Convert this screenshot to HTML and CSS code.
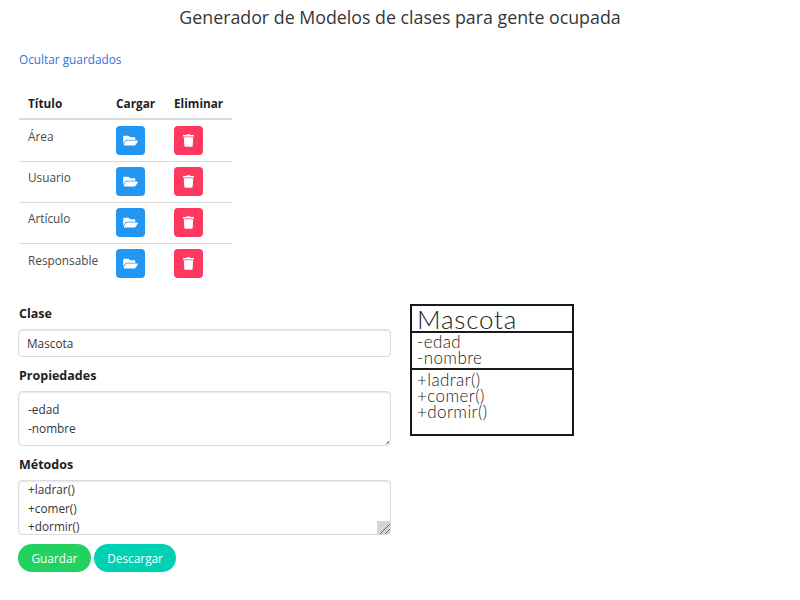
FILE: index.html
```html
<!DOCTYPE html>
<html lang="es">
<head>
<meta charset="utf-8">
<title>Generador de Modelos</title>
<link rel="stylesheet" href="styles.css">
</head>
<body>
<h1 class="title">Generador de Modelos de clases para gente ocupada</h1>
<a class="toggle" href="#">Ocultar guardados</a>
<table class="saved">
  <thead><tr><th class="col-title">Título</th><th class="col-load">Cargar</th><th class="col-del">Eliminar</th></tr></thead>
  <tbody>
    <tr><td>Área</td><td><button class="icon-btn load"><svg viewBox="0 0 576 512" width="15" height="13"><path fill="currentColor" d="M572.7 292.100L500.300 416.200A64 64 0 0 1 445 448H45c-18.500 0-30.100-20.100-20.700-36.100l72.400-124.200A64 64 0 0 1 152 256h400c18.500 0 30.100 20.100 20.700 36.100zM152 224h328v-48c0-26.500-21.500-48-48-48H272l-64-64H48C21.500 64 0 85.500 0 112v278l69.100-118.400C86.200 242.300 117.800 224 152 224z"/></svg></button></td><td><button class="icon-btn del"><svg viewBox="0 0 448 512" width="11" height="13"><path fill="currentColor" d="M432 32H312l-9.400-18.700A24 24 0 0 0 281.100 0H166.800a23.700 23.700 0 0 0-21.400 13.300L136 32H16A16 16 0 0 0 0 48v32a16 16 0 0 0 16 16h416a16 16 0 0 0 16-16V48a16 16 0 0 0-16-16zM53.200 467a48 48 0 0 0 47.900 45h245.800a48 48 0 0 0 47.900-45L416 128H32z"/></svg></button></td></tr>
    <tr><td>Usuario</td><td><button class="icon-btn load"><svg viewBox="0 0 576 512" width="15" height="13"><path fill="currentColor" d="M572.7 292.100L500.300 416.200A64 64 0 0 1 445 448H45c-18.500 0-30.100-20.100-20.700-36.100l72.400-124.200A64 64 0 0 1 152 256h400c18.500 0 30.100 20.100 20.700 36.100zM152 224h328v-48c0-26.500-21.500-48-48-48H272l-64-64H48C21.500 64 0 85.500 0 112v278l69.100-118.400C86.200 242.300 117.800 224 152 224z"/></svg></button></td><td><button class="icon-btn del"><svg viewBox="0 0 448 512" width="11" height="13"><path fill="currentColor" d="M432 32H312l-9.400-18.700A24 24 0 0 0 281.100 0H166.800a23.700 23.700 0 0 0-21.400 13.300L136 32H16A16 16 0 0 0 0 48v32a16 16 0 0 0 16 16h416a16 16 0 0 0 16-16V48a16 16 0 0 0-16-16zM53.200 467a48 48 0 0 0 47.900 45h245.800a48 48 0 0 0 47.900-45L416 128H32z"/></svg></button></td></tr>
    <tr><td>Artículo</td><td><button class="icon-btn load"><svg viewBox="0 0 576 512" width="15" height="13"><path fill="currentColor" d="M572.7 292.100L500.300 416.200A64 64 0 0 1 445 448H45c-18.500 0-30.100-20.100-20.700-36.100l72.400-124.200A64 64 0 0 1 152 256h400c18.500 0 30.100 20.100 20.700 36.100zM152 224h328v-48c0-26.500-21.500-48-48-48H272l-64-64H48C21.500 64 0 85.500 0 112v278l69.100-118.400C86.200 242.300 117.800 224 152 224z"/></svg></button></td><td><button class="icon-btn del"><svg viewBox="0 0 448 512" width="11" height="13"><path fill="currentColor" d="M432 32H312l-9.400-18.700A24 24 0 0 0 281.100 0H166.800a23.700 23.700 0 0 0-21.400 13.300L136 32H16A16 16 0 0 0 0 48v32a16 16 0 0 0 16 16h416a16 16 0 0 0 16-16V48a16 16 0 0 0-16-16zM53.200 467a48 48 0 0 0 47.900 45h245.800a48 48 0 0 0 47.900-45L416 128H32z"/></svg></button></td></tr>
    <tr><td>Responsable</td><td><button class="icon-btn load"><svg viewBox="0 0 576 512" width="15" height="13"><path fill="currentColor" d="M572.7 292.100L500.300 416.200A64 64 0 0 1 445 448H45c-18.500 0-30.100-20.100-20.700-36.100l72.400-124.200A64 64 0 0 1 152 256h400c18.500 0 30.100 20.100 20.700 36.100zM152 224h328v-48c0-26.500-21.500-48-48-48H272l-64-64H48C21.500 64 0 85.500 0 112v278l69.100-118.400C86.200 242.300 117.800 224 152 224z"/></svg></button></td><td><button class="icon-btn del"><svg viewBox="0 0 448 512" width="11" height="13"><path fill="currentColor" d="M432 32H312l-9.400-18.700A24 24 0 0 0 281.100 0H166.800a23.700 23.700 0 0 0-21.400 13.300L136 32H16A16 16 0 0 0 0 48v32a16 16 0 0 0 16 16h416a16 16 0 0 0 16-16V48a16 16 0 0 0-16-16zM53.200 467a48 48 0 0 0 47.900 45h245.800a48 48 0 0 0 47.900-45L416 128H32z"/></svg></button></td></tr>
  </tbody>
</table>
<div class="editor">
  <form class="form">
    <label class="label">Clase</label>
    <input class="field input" value="Mascota">
    <label class="label">Propiedades</label>
    <div class="area-wrap">
      <textarea class="field area">-edad
-nombre</textarea>
      <span class="grip-small"></span>
    </div>
    <label class="label">Métodos</label>
    <div class="area-wrap">
      <div class="field area scrolled"><div class="scrolled-lines">+ladrar()<br>+comer()<br>+dormir()</div></div>
      <span class="grip"></span>
    </div>
    <div class="actions">
      <button type="button" class="pill save">Guardar</button>
      <button type="button" class="pill download">Descargar</button>
    </div>
  </form>
  <div class="uml">
    <div class="uml-name">Mascota</div>
    <div class="uml-props">-edad<br>-nombre</div>
    <div class="uml-methods">+ladrar()<br>+comer()<br>+dormir()</div>
  </div>
</div>
</body>
</html>
```

FILE: styles.css
```css
* { box-sizing: border-box; }
html, body { margin: 0; padding: 0; background: #fff; }
body {
  padding: 0 18px;
  font-family: "Open Sans", "Noto Sans", sans-serif;
  font-size: 11.8px;
  color: #4a4a4a;
  height: 600px;
  overflow: hidden;
}
.title {
  margin: 0;
  padding-top: 5px;
  height: 49px;
  text-align: center;
  font-size: 17.800px;
  line-height: 24px;
  font-weight: 400;
  color: #363636;
}
.toggle {
  display: block;
  height: 20px;
  line-height: 20px;
  margin-left: 1px;
  color: #3273dc;
  text-decoration: none;
}
.saved {
  margin-top: 21px;
  margin-left: 1px;
  width: 213px;
  border-collapse: collapse;
  table-layout: fixed;
}
.saved th {
  height: 29px;
  padding: 0 0 2px 9px;
  text-align: left;
  font-weight: 700;
  color: #222;
  border-bottom: 2px solid #dbdbdb;
}
.col-title { width: 88px; }
.col-load { width: 58px; }
.saved td {
  height: 41px;
  padding: 5px 0 0 9px;
  vertical-align: top;
  border-bottom: 1px solid #dbdbdb;
}
.saved td:first-child { padding-top: 7px; }
.saved tbody tr:first-child td { height: 42px; padding-top: 6px; }
.saved tbody tr:first-child td:first-child { padding-top: 8px; }
.saved tbody tr:last-child td { border-bottom: 0; }
.saved tbody tr:last-child td:first-child { padding-top: 8px; }
.icon-btn {
  display: flex;
  align-items: center;
  justify-content: center;
  width: 29px;
  height: 29px;
  padding: 0;
  border: 0;
  border-radius: 4px;
  color: #fff;
}
.load { background: #2196f3; }
.del { background: #ff3860; }
.editor {
  display: flex;
  align-items: flex-start;
  gap: 19px;
  margin-top: 20px;
}
.form {
  display: flex;
  flex-direction: column;
  width: 373px;
  margin-top: 1px;
}
.label {
  display: block;
  height: 18px;
  line-height: 18px;
  margin-bottom: 6px;
  margin-left: 1px;
  font-size: 12.500px;
  font-weight: 700;
  color: #222;
}
.field {
  display: block;
  width: 100%;
  margin: 0;
  border: 1px solid #dbdbdb;
  border-radius: 4px;
  box-shadow: inset 0 1px 2px rgba(10, 10, 10, .1);
  font: inherit;
  color: #363636;
  background: #fff;
  outline: 0;
}
.input { height: 28px; padding: 0 8px; margin-bottom: 10px; }
.area {
  height: 55px;
  padding: 8px 9px;
  line-height: 18.500px;
  resize: none;
}
.area-wrap { position: relative; margin-bottom: 10px; }
.scrolled { padding-top: 0; overflow: hidden; }
.scrolled-lines { margin-top: -1px; }
.grip {
  position: absolute;
  right: 1px;
  bottom: 1px;
  width: 13px;
  height: 13px;
  background: linear-gradient(135deg, #d6d6d6 0 60%, #666 60% 65%, #d6d6d6 65% 78%, #666 78% 83%, #d6d6d6 83%);
}
.grip-small {
  position: absolute;
  right: 2px;
  bottom: 2px;
  width: 3px;
  height: 3px;
  background: linear-gradient(135deg, transparent 0 45%, #888 45% 70%, transparent 70%);
}
.actions { display: flex; gap: 3px; margin-top: -1px; }
.pill {
  height: 28px;
  padding: 0 13.500px;
  border: 0;
  border-radius: 14px;
  font: inherit;
  color: #fff;
}
.save { background: #23d160; }
.download { background: #00d1b2; }
.uml {
  width: 164px;
  height: 132px;
  border: 2px solid #1a1a1a;
  font-family: "Lato", "Liberation Sans", sans-serif;
  font-weight: 300;
  color: #222;
  font-size: 17px;
  line-height: 16px;
  letter-spacing: .4px;
}
.uml-name {
  height: 27px;
  padding: 0 5px;
  font-size: 26px;
  line-height: 27px;
  letter-spacing: .8px;
  border-bottom: 2px solid #1a1a1a;
}
.uml-props {
  height: 37px;
  padding: 1px 5px 0;
  border-bottom: 2px solid #1a1a1a;
}
.uml-methods { padding: 2px 5px 0; }
```
